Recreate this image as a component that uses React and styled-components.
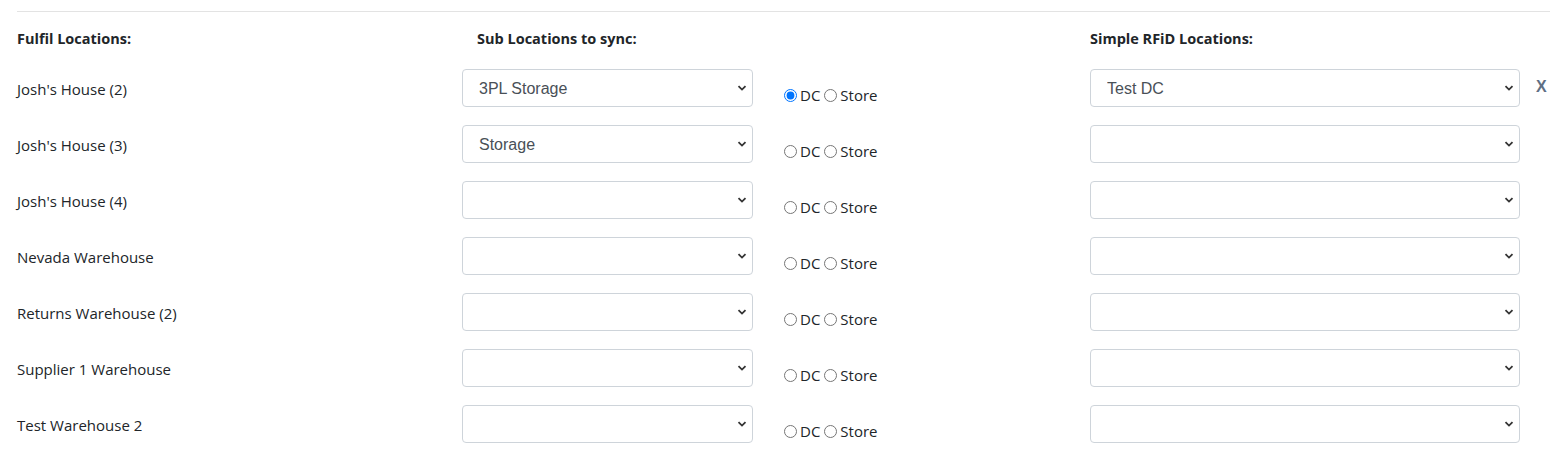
import React from 'react';
import styled, { createGlobalStyle } from 'styled-components';

const GlobalStyle = createGlobalStyle`
  body {
    margin: 0;
    background: #fff;
    font-family: 'Open Sans', 'Segoe UI', sans-serif;
    font-size: 15px;
    color: #212529;
  }
`;

const rows = [
  { name: "Josh's House (2)", sub: '3PL Storage', type: 'DC', rfid: 'Test DC' },
  { name: "Josh's House (3)", sub: 'Storage', type: '', rfid: '' },
  { name: "Josh's House (4)", sub: '', type: '', rfid: '' },
  { name: 'Nevada Warehouse', sub: '', type: '', rfid: '' },
  { name: 'Returns Warehouse (2)', sub: '', type: '', rfid: '' },
  { name: 'Supplier 1 Warehouse', sub: '', type: '', rfid: '' },
  { name: 'Test Warehouse 2', sub: '', type: '', rfid: '' },
];

const Chevron = () => (
  <svg width="10" height="10" viewBox="0 0 10 10">
    <path d="M1.5 3.2 L5 6.6 L8.5 3.2" fill="none" stroke="#333" strokeWidth="1.8" />
  </svg>
);

const Select = ({ value, width }) => (
  <SelectWrap $width={width}>
    <SelectBox defaultValue={value}>
      <option value={value}>{value}</option>
    </SelectBox>
    <Arrow>
      <Chevron />
    </Arrow>
  </SelectWrap>
);

const App = () => {
  return (
    <Page>
      <GlobalStyle />
      <Divider />
      <Table>
        <HeadCell>Fulfil Locations:</HeadCell>
        <HeadCell $indent>Sub Locations to sync:</HeadCell>
        <HeadCell>Simple RFiD Locations:</HeadCell>

        {rows.map((r, i) => (
          <React.Fragment key={r.name}>
            <Label>{r.name}</Label>
            <SubCell>
              <Select value={r.sub} width={291} />
              <RadioGroup>
                <Radio type="radio" name={`t${i}`} defaultChecked={r.type === 'DC'} />
                <span>DC</span>
                <Radio type="radio" name={`t${i}`} defaultChecked={r.type === 'Store'} />
                <span>Store</span>
              </RadioGroup>
            </SubCell>
            <RfidCell>
              <Select value={r.rfid} width={430} />
              {r.rfid && <Remove>X</Remove>}
            </RfidCell>
          </React.Fragment>
        ))}
      </Table>
    </Page>
  );
};

export default App;

const Page = styled.div`
  padding: 11px 15px 0 17px;
`;

const Divider = styled.div`
  border-top: 1px solid #e3e3e3;
`;

const Table = styled.div`
  display: grid;
  grid-template-columns: 445px 628px 1fr;
  grid-auto-rows: 56px;
`;

const HeadCell = styled.div`
  font-weight: 700;
  font-size: 14.5px;
  padding-left: ${p => (p.$indent ? '15px' : '0')};
  display: flex;
  align-items: center;
  height: 52px;
`;

const Label = styled.div`
  display: flex;
  align-items: center;
  height: 38px;
  margin-top: 2px;
`;

const SubCell = styled.div`
  display: flex;
  align-items: flex-start;
  gap: 31px;
  padding-top: 1px;
`;

const RfidCell = styled.div`
  display: flex;
  align-items: flex-start;
  gap: 16px;
  padding-top: 1px;
`;

const SelectWrap = styled.div`
  position: relative;
  width: ${p => p.$width}px;
  height: 38px;
`;

const SelectBox = styled.select`
  appearance: none;
  width: 100%;
  height: 38px;
  box-sizing: border-box;
  border: 1px solid #ced4da;
  border-radius: 4px;
  background: #fff;
  padding: 0 30px 0 16px;
  font-family: 'Liberation Sans', Arial, sans-serif;
  font-size: 16px;
  color: #495057;
  outline: none;
`;

const Arrow = styled.span`
  position: absolute;
  right: 6px;
  top: 14px;
  pointer-events: none;
  display: flex;
`;

const RadioGroup = styled.div`
  display: flex;
  align-items: center;
  margin-top: 17px;
  font-size: 15px;
  line-height: 18px;
  color: #212529;

  span {
    margin-right: 4px;
  }
`;

const Radio = styled.input`
  width: 13px;
  height: 13px;
  margin: 0 3px 0 0;
  accent-color: #0075ff;
`;

const Remove = styled.span`
  margin-top: 9px;
  font-family: 'Liberation Sans', Arial, sans-serif;
  font-weight: 700;
  font-size: 16px;
  color: #5f6f84;
`;
